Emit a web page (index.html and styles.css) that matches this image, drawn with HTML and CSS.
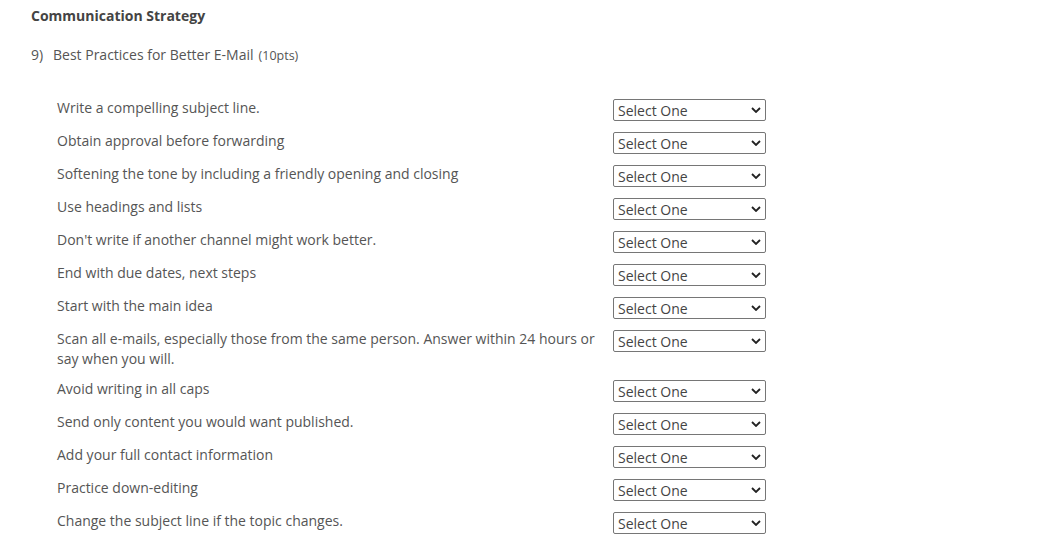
FILE: index.html
```html
<!DOCTYPE html>
<html>
<head>
<meta charset="utf-8">
<link rel="stylesheet" href="styles.css">
</head>
<body>
<div class="page">
  <h2 class="section-title">Communication Strategy</h2>
  <div class="question">
    <span class="qnum">9)</span>
    <span class="qtext">Best Practices for Better E-Mail</span>
    <span class="pts">(10pts)</span>
  </div>
  <div class="items">
    <div class="row"><div class="label">Write a compelling subject line.</div><div class="sel"><select><option>Select One</option></select><svg class="chev" viewBox="0 0 10 6" width="10" height="6"><path d="M1 1 L5 5 L9 1" fill="none" stroke="#222" stroke-width="1.8"/></svg></div></div>
    <div class="row"><div class="label">Obtain approval before forwarding</div><div class="sel"><select><option>Select One</option></select><svg class="chev" viewBox="0 0 10 6" width="10" height="6"><path d="M1 1 L5 5 L9 1" fill="none" stroke="#222" stroke-width="1.8"/></svg></div></div>
    <div class="row"><div class="label">Softening the tone by including a friendly opening and closing</div><div class="sel"><select><option>Select One</option></select><svg class="chev" viewBox="0 0 10 6" width="10" height="6"><path d="M1 1 L5 5 L9 1" fill="none" stroke="#222" stroke-width="1.8"/></svg></div></div>
    <div class="row"><div class="label">Use headings and lists</div><div class="sel"><select><option>Select One</option></select><svg class="chev" viewBox="0 0 10 6" width="10" height="6"><path d="M1 1 L5 5 L9 1" fill="none" stroke="#222" stroke-width="1.8"/></svg></div></div>
    <div class="row"><div class="label">Don't write if another channel might work better.</div><div class="sel"><select><option>Select One</option></select><svg class="chev" viewBox="0 0 10 6" width="10" height="6"><path d="M1 1 L5 5 L9 1" fill="none" stroke="#222" stroke-width="1.8"/></svg></div></div>
    <div class="row"><div class="label">End with due dates, next steps</div><div class="sel"><select><option>Select One</option></select><svg class="chev" viewBox="0 0 10 6" width="10" height="6"><path d="M1 1 L5 5 L9 1" fill="none" stroke="#222" stroke-width="1.8"/></svg></div></div>
    <div class="row"><div class="label">Start with the main idea</div><div class="sel"><select><option>Select One</option></select><svg class="chev" viewBox="0 0 10 6" width="10" height="6"><path d="M1 1 L5 5 L9 1" fill="none" stroke="#222" stroke-width="1.8"/></svg></div></div>
    <div class="row"><div class="label">Scan all e-mails, especially those from the same person. Answer within 24 hours or say when you will.</div><div class="sel"><select><option>Select One</option></select><svg class="chev" viewBox="0 0 10 6" width="10" height="6"><path d="M1 1 L5 5 L9 1" fill="none" stroke="#222" stroke-width="1.8"/></svg></div></div>
    <div class="row"><div class="label">Avoid writing in all caps</div><div class="sel"><select><option>Select One</option></select><svg class="chev" viewBox="0 0 10 6" width="10" height="6"><path d="M1 1 L5 5 L9 1" fill="none" stroke="#222" stroke-width="1.8"/></svg></div></div>
    <div class="row"><div class="label">Send only content you would want published.</div><div class="sel"><select><option>Select One</option></select><svg class="chev" viewBox="0 0 10 6" width="10" height="6"><path d="M1 1 L5 5 L9 1" fill="none" stroke="#222" stroke-width="1.8"/></svg></div></div>
    <div class="row"><div class="label">Add your full contact information</div><div class="sel"><select><option>Select One</option></select><svg class="chev" viewBox="0 0 10 6" width="10" height="6"><path d="M1 1 L5 5 L9 1" fill="none" stroke="#222" stroke-width="1.8"/></svg></div></div>
    <div class="row"><div class="label">Practice down-editing</div><div class="sel"><select><option>Select One</option></select><svg class="chev" viewBox="0 0 10 6" width="10" height="6"><path d="M1 1 L5 5 L9 1" fill="none" stroke="#222" stroke-width="1.8"/></svg></div></div>
    <div class="row"><div class="label">Change the subject line if the topic changes.</div><div class="sel"><select><option>Select One</option></select><svg class="chev" viewBox="0 0 10 6" width="10" height="6"><path d="M1 1 L5 5 L9 1" fill="none" stroke="#222" stroke-width="1.8"/></svg></div></div>
  </div>
</div>
</body>
</html>
```
FILE: styles.css
```css
html, body {
  margin: 0;
  padding: 0;
  background: #fff;
}
body {
  font-family: "Open Sans", "Liberation Sans", sans-serif;
  color: #555;
  font-size: 14px;
}
.page {
  padding: 6px 0 0 31px;
}
.section-title {
  margin: 0;
  font-size: 14px;
  font-weight: 700;
  color: #444;
  line-height: 20px;
}
.question {
  margin-top: 19px;
  line-height: 20px;
  color: #555;
  display: flex;
  align-items: baseline;
}
.qnum {
  width: 22px;
}
.qtext {
  margin-right: 5px;
}
.pts {
  font-size: 12.5px;
}
.items {
  margin-top: 32px;
  padding-left: 26px;
}
.row {
  display: flex;
  align-items: flex-start;
  margin-bottom: 10px;
}
.label {
  width: 548px;
  line-height: 20px;
  margin-right: 8px;
}
.sel {
  position: relative;
  margin-top: 1px;
}
.sel select {
  appearance: none;
  -webkit-appearance: none;
  width: 153px;
  height: 22px;
  border: 1px solid #767676;
  border-radius: 2px;
  background: #fff;
  font-family: "Open Sans", "Liberation Sans", sans-serif;
  font-size: 14px;
  color: #444;
  padding: 0 0 0 4px;
  margin: 0;
  display: block;
}
.chev {
  position: absolute;
  right: 5px;
  top: 8px;
  pointer-events: none;
}
```
